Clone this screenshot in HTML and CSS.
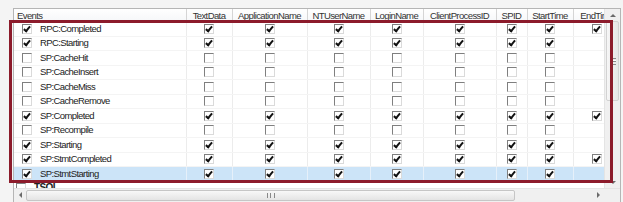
FILE: index.html
```html
<!DOCTYPE html>
<html lang="en">
<head>
    <meta charset="UTF-8">
    <title>Events Selection</title>
    <link rel="stylesheet" href="styles.css">
</head>
<body>
    <div class="screen">
        <div class="grid">
            <div class="main">
                <div class="view">
                    <table class="events">
                        <colgroup>
                            <col style="width:172px"><col style="width:46px"><col style="width:75px">
                            <col style="width:63px"><col style="width:53px"><col style="width:73px">
                            <col style="width:31px"><col style="width:46px"><col style="width:48px">
                        </colgroup>
                        <thead>
                            <tr>
                                <th class="ev">Events</th>
                                <th>TextData</th>
                                <th>ApplicationName</th>
                                <th>NTUserName</th>
                                <th>LoginName</th>
                                <th>ClientProcessID</th>
                                <th>SPID</th>
                                <th>StartTime</th>
                                <th>EndTime</th>
                            </tr>
                        </thead>
                        <tbody>
                            <tr>
                                <td class="ev"><span class="cb on"></span><span class="name">RPC:Completed</span></td>
                                <td><span class="cb on"></span></td><td><span class="cb on"></span></td><td><span class="cb on"></span></td>
                                <td><span class="cb on"></span></td><td><span class="cb on"></span></td><td><span class="cb on"></span></td>
                                <td><span class="cb on"></span></td><td><span class="cb on"></span></td>
                            </tr>
                            <tr>
                                <td class="ev"><span class="cb on"></span><span class="name">RPC:Starting</span></td>
                                <td><span class="cb on"></span></td><td><span class="cb on"></span></td><td><span class="cb on"></span></td>
                                <td><span class="cb on"></span></td><td><span class="cb on"></span></td><td><span class="cb on"></span></td>
                                <td><span class="cb on"></span></td><td></td>
                            </tr>
                            <tr>
                                <td class="ev"><span class="cb"></span><span class="name">SP:CacheHit</span></td>
                                <td><span class="cb"></span></td><td><span class="cb"></span></td><td><span class="cb"></span></td>
                                <td><span class="cb"></span></td><td><span class="cb"></span></td><td><span class="cb"></span></td>
                                <td><span class="cb"></span></td><td></td>
                            </tr>
                            <tr>
                                <td class="ev"><span class="cb"></span><span class="name">SP:CacheInsert</span></td>
                                <td><span class="cb"></span></td><td><span class="cb"></span></td><td><span class="cb"></span></td>
                                <td><span class="cb"></span></td><td><span class="cb"></span></td><td><span class="cb"></span></td>
                                <td><span class="cb"></span></td><td></td>
                            </tr>
                            <tr>
                                <td class="ev"><span class="cb"></span><span class="name">SP:CacheMiss</span></td>
                                <td><span class="cb"></span></td><td><span class="cb"></span></td><td><span class="cb"></span></td>
                                <td><span class="cb"></span></td><td><span class="cb"></span></td><td><span class="cb"></span></td>
                                <td><span class="cb"></span></td><td></td>
                            </tr>
                            <tr>
                                <td class="ev"><span class="cb"></span><span class="name">SP:CacheRemove</span></td>
                                <td><span class="cb"></span></td><td><span class="cb"></span></td><td><span class="cb"></span></td>
                                <td><span class="cb"></span></td><td><span class="cb"></span></td><td><span class="cb"></span></td>
                                <td><span class="cb"></span></td><td></td>
                            </tr>
                            <tr>
                                <td class="ev"><span class="cb on"></span><span class="name">SP:Completed</span></td>
                                <td><span class="cb on"></span></td><td><span class="cb on"></span></td><td><span class="cb on"></span></td>
                                <td><span class="cb on"></span></td><td><span class="cb on"></span></td><td><span class="cb on"></span></td>
                                <td><span class="cb on"></span></td><td><span class="cb on"></span></td>
                            </tr>
                            <tr>
                                <td class="ev"><span class="cb"></span><span class="name">SP:Recompile</span></td>
                                <td><span class="cb"></span></td><td><span class="cb"></span></td><td><span class="cb"></span></td>
                                <td><span class="cb"></span></td><td><span class="cb"></span></td><td><span class="cb"></span></td>
                                <td><span class="cb"></span></td><td></td>
                            </tr>
                            <tr>
                                <td class="ev"><span class="cb on"></span><span class="name">SP:Starting</span></td>
                                <td><span class="cb on"></span></td><td><span class="cb on"></span></td><td><span class="cb on"></span></td>
                                <td><span class="cb on"></span></td><td><span class="cb on"></span></td><td><span class="cb on"></span></td>
                                <td><span class="cb on"></span></td><td></td>
                            </tr>
                            <tr>
                                <td class="ev"><span class="cb on"></span><span class="name">SP:StmtCompleted</span></td>
                                <td><span class="cb on"></span></td><td><span class="cb on"></span></td><td><span class="cb on"></span></td>
                                <td><span class="cb on"></span></td><td><span class="cb on"></span></td><td><span class="cb on"></span></td>
                                <td><span class="cb on"></span></td><td><span class="cb on"></span></td>
                            </tr>
                            <tr class="selected">
                                <td class="ev"><span class="cb on"></span><span class="name">SP:StmtStarting</span></td>
                                <td><span class="cb on"></span></td><td><span class="cb on"></span></td><td><span class="cb on"></span></td>
                                <td><span class="cb on"></span></td><td><span class="cb on"></span></td><td><span class="cb on"></span></td>
                                <td><span class="cb on"></span></td><td></td>
                            </tr>
                            <tr class="category">
                                <td colspan="9"><span class="cb"></span><span class="name">TSQL</span></td>
                            </tr>
                        </tbody>
                    </table>
                </div>
                <div class="vscroll">
                    <div class="arrow up"></div>
                    <div class="vthumb"><span class="grip-v"></span></div>
                    <div class="vtrack"></div>
                    <div class="arrow down"></div>
                </div>
            </div>
            <div class="hscroll">
                <div class="arrow left"></div>
                <div class="hthumb"><span class="grip-h"></span></div>
                <div class="htrack"></div>
                <div class="arrow right"></div>
                <div class="corner"></div>
            </div>
        </div>
        <div class="mark"></div>
    </div>
</body>
</html>
```

FILE: styles.css
```css
html, body {
    margin: 0;
    padding: 0;
}
body {
    background-color: #f4f4f4;
    font-family: "Liberation Sans", Arial, sans-serif;
    font-size: 9.5px;
    color: #222;
}
.screen {
    position: relative;
    width: 623px;
    height: 202px;
    overflow: hidden;
    box-sizing: border-box;
    padding: 8px 0 0 13px;
}
.grid {
    width: 608px;
    box-sizing: border-box;
    border: 1px solid #b5b5b5;
    background-color: #fff;
}
.main {
    display: flex;
    height: 179px;
}
.view {
    width: 590px;
    overflow: hidden;
    background-color: #fff;
}
.events {
    table-layout: fixed;
    border-collapse: collapse;
    width: 607px;
    letter-spacing: -0.6px;
}
.events th {
    height: 12px;
    padding: 0 1px;
    font-weight: normal;
    color: #333;
    text-align: center;
    white-space: nowrap;
    overflow: hidden;
    background: linear-gradient(#ffffff, #f6f7f9);
    border-right: 1px solid #d5d5d5;
    border-bottom: 1px solid #d5d5d5;
}
.events th.ev {
    text-align: left;
    padding-left: 3px;
}
.events td {
    height: 13.5px;
    padding: 0;
    text-align: center;
    vertical-align: middle;
    line-height: 10px;
    white-space: nowrap;
    border-right: 1px solid #ececec;
    border-bottom: 1px solid #f4f4f4;
}
.events td.ev {
    text-align: left;
    padding-left: 8px;
}
.name {
    margin-left: 8px;
    vertical-align: middle;
}
.selected td {
    background-color: #cce4f8;
    border-right-color: #e6f0fa;
}
.category td {
    text-align: left;
    padding-left: 2px;
    border-right: none;
}
.category .name {
    font-weight: bold;
    font-size: 10px;
}
.cb {
    display: inline-block;
    position: relative;
    width: 8px;
    height: 8px;
    border: 1px solid;
    border-color: #7f7f7f #dadada #dadada #7f7f7f;
    background-color: #fff;
    vertical-align: middle;
}
.cb.on::after {
    content: '';
    position: absolute;
    left: 2px;
    top: 0;
    width: 2px;
    height: 5px;
    border: solid #111;
    border-width: 0 2px 2px 0;
    transform: rotate(40deg);
}
.vscroll {
    width: 16px;
    display: flex;
    flex-direction: column;
    background-color: #f0f0f0;
    border-left: 1px solid #e4e4e4;
    box-sizing: border-box;
}
.vthumb {
    height: 78px;
    margin: 0 1px;
    border: 1px solid #d2d2d2;
    border-radius: 2px;
    background: linear-gradient(90deg, #f6f6f6, #e6e6e6);
    display: flex;
    align-items: center;
    justify-content: center;
}
.grip-v {
    width: 6px;
    height: 5px;
    border-top: 1px solid #888;
    border-bottom: 1px solid #888;
    background: linear-gradient(#fff 0 1px, #888 1px 2px, transparent 2px) 0 1px / 6px 3px repeat-x;
}
.vtrack {
    flex: 1;
}
.hscroll {
    display: flex;
    height: 13px;
    background-color: #f0f0f0;
    border-top: 1px solid #e4e4e4;
}
.hthumb {
    width: 487px;
    margin: 1px 0;
    border: 1px solid #c6c6c6;
    border-radius: 2px;
    background: linear-gradient(#f8f8f8, #e4e4e4);
    display: flex;
    align-items: center;
    justify-content: center;
}
.grip-h {
    width: 6px;
    height: 5px;
    border-left: 1px solid #888;
    border-right: 1px solid #888;
    background: linear-gradient(90deg, transparent 2px, #888 2px 3px, transparent 3px);
}
.htrack {
    flex: 1;
}
.corner {
    width: 16px;
    background-color: #f0f0f0;
}
.arrow {
    width: 12px;
    height: 12px;
    display: flex;
    align-items: center;
    justify-content: center;
    flex-shrink: 0;
}
.arrow::before {
    content: '';
    width: 0;
    height: 0;
    border: 3px solid transparent;
}
.vscroll .arrow {
    width: 15px;
}
.arrow.up::before {
    border-bottom-color: #6a6a6a;
    border-top-width: 0;
}
.arrow.down::before {
    border-top-color: #6a6a6a;
    border-bottom-width: 0;
}
.arrow.left::before {
    border-right-color: #6a6a6a;
    border-left-width: 0;
}
.arrow.right::before {
    border-left-color: #6a6a6a;
    border-right-width: 0;
}
.mark {
    position: absolute;
    left: 9px;
    top: 20px;
    width: 604px;
    height: 163px;
    box-sizing: border-box;
    border: 3px solid #8c1b2b;
}
```
